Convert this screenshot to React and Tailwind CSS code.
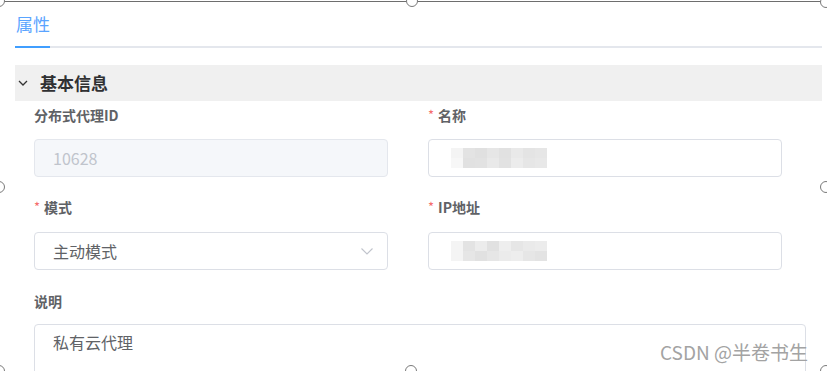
import React from 'react';

const nameBlur = [
  ['#f4f4f4', '#e3e3e3', '#e0e0e0', '#e6e6e6', '#e1e1e1', '#e9e9e9', '#e4e4e4', '#e6e6e6'],
  ['#f7f7f7', '#e1e1e1', '#e2e2e2', '#e9e9e9', '#e2e2e2', '#ececec', '#e6e6e6', '#e8e8e8'],
];
const ipBlur = [
  ['#f4f4f4', '#e3e3e3', '#ececec', '#e1e1e1', '#eeeeee', '#e6e6e6', '#eaeaea', '#ececec'],
  ['#f4f4f4', '#e6e6e6', '#e1e1e1', '#e6e6e6', '#ebebeb', '#ededed', '#e6e6e6', '#e3e3e3'],
];

function Blur({ cells }) {
  return (
    <div className="flex flex-col">
      {cells.map((row, i) => (
        <div key={i} className="flex">
          {row.map((c, j) => (
            <div key={j} className="w-[12px] h-[10px]" style={{ background: c }} />
          ))}
        </div>
      ))}
    </div>
  );
}

function Label({ children, required }) {
  return (
    <div className="h-[20px] flex items-center text-[14px] font-bold text-[#606266] leading-[20px]">
      {required && <span className="text-[#f56c6c] font-normal mr-[4px] text-[13px]">*</span>}
      {children}
    </div>
  );
}

function Handle({ className }) {
  return <div className={`absolute w-[12px] h-[12px] rounded-full border border-[#7a7a7a] bg-white ${className}`} />;
}

export default function App() {
  return (
    <div className="relative w-[827px] h-[371px] overflow-hidden bg-white" style={{ fontFamily: '"Noto Sans CJK SC", "Noto Sans", sans-serif' }}>
      <div className="pl-[15px] pr-[5px]">
        {/* 标签页 */}
        <div className="flex flex-col">
          <div className="pt-[12px] pb-[10px] pl-[1px] text-[17px] leading-[24px] text-[#5aa4ff]">属性</div>
          <div className="relative h-[2px] w-[807px] bg-[#e4e7ed]">
            <div className="absolute left-0 top-0 h-[2px] w-[35px] bg-[#409eff]" />
          </div>
        </div>

        {/* 基本信息 */}
        <div className="mt-[17px] h-[36px] w-[807px] bg-[#f0f0f0] flex items-center">
          <svg width="12" height="12" viewBox="0 0 12 12" className="ml-[2px]">
            <path d="M2 4 L6 8 L10 4" fill="none" stroke="#333" strokeWidth="1.3" />
          </svg>
          <span className="ml-[11px] text-[17px] font-bold text-[#303133]">基本信息</span>
        </div>

        <div className="pl-[19px]">
          <div className="grid grid-cols-[394px_394px]">
            <div className="mt-[4px]">
              <Label>分布式代理ID</Label>
              <div className="mt-[14px] w-[354px] h-[38px] rounded-[4px] border border-[#e4e7ed] bg-[#f5f7fa] flex items-center pl-[18px] text-[16px] text-[#c0c4cc]">10628</div>
            </div>
            <div className="mt-[4px]">
              <Label required>名称</Label>
              <div className="mt-[14px] w-[354px] h-[38px] rounded-[4px] border border-[#dcdfe6] bg-white flex items-center pl-[22px]">
                <Blur cells={nameBlur} />
              </div>
            </div>
            <div className="mt-[20px]">
              <Label required>模式</Label>
              <div className="mt-[15px] w-[354px] h-[38px] rounded-[4px] border border-[#dcdfe6] bg-white flex items-center justify-between pl-[18px] pr-[13px] text-[16px] text-[#606266]">
                <span>主动模式</span>
                <svg width="14" height="14" viewBox="0 0 14 14">
                  <path d="M1.5 4.5 L7 10 L12.5 4.5" fill="none" stroke="#c0c4cc" strokeWidth="1.1" />
                </svg>
              </div>
            </div>
            <div className="mt-[20px]">
              <Label required>IP地址</Label>
              <div className="mt-[15px] w-[354px] h-[38px] rounded-[4px] border border-[#dcdfe6] bg-white flex items-center pl-[22px]">
                <Blur cells={ipBlur} />
              </div>
            </div>
          </div>

          <div className="mt-[21px]">
            <Label>说明</Label>
            <div className="mt-[13px] w-[772px] h-[70px] rounded-[4px] border border-[#dcdfe6] bg-white pl-[18px] pt-[5px] text-[16px] leading-[24px] text-[#606266]">私有云代理</div>
          </div>
        </div>
      </div>

      {/* 水印 */}
      <div className="absolute left-[660px] top-[339px] text-[19px] leading-[26px] text-[#a3a3a3]" style={{ fontFamily: '"Noto Sans CJK SC", sans-serif' }}>CSDN @半卷书生</div>

      {/* 选框 */}
      <div className="absolute left-0 top-[1px] w-[826px] h-[1px] bg-[#6e6e6e]" />
      <Handle className="-left-[7px] -top-[5px]" />
      <Handle className="left-[406px] -top-[5px]" />
      <Handle className="left-[820px] -top-[4px]" />
      <Handle className="-left-[7px] top-[181px]" />
      <Handle className="left-[820px] top-[181px]" />
      <Handle className="-left-[7px] top-[365px]" />
      <Handle className="left-[405px] top-[365px]" />
      <Handle className="left-[820px] top-[365px]" />
    </div>
  );
}
